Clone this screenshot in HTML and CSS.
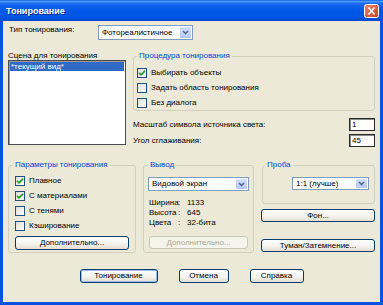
FILE: index.html
```html
<!DOCTYPE html>
<html lang="ru">
<head>
    <meta charset="UTF-8">
    <title>Тонирование</title>
    <link rel="stylesheet" href="styles.css">
</head>
<body>
    <div class="window">
        <div class="titlebar">
            <span class="title">Тонирование</span>
            <span class="close">
                <svg width="15" height="14" viewBox="0 0 15 14">
                    <defs>
                        <linearGradient id="cg" x1="0" y1="0" x2="1" y2="1">
                            <stop offset="0" stop-color="#f0876a"/>
                            <stop offset="1" stop-color="#c8401f"/>
                        </linearGradient>
                    </defs>
                    <rect x="0.5" y="0.5" width="14" height="13" rx="2" fill="url(#cg)" stroke="#fff"/>
                    <path d="M4.5 3.5 L10.5 10.5 M10.5 3.5 L4.5 10.5" stroke="#fff" stroke-width="1.6"/>
                </svg>
            </span>
        </div>
        <div class="frame">
            <div class="type-row">
                <span class="type-label">Тип тонирования:</span>
                <div class="combo type-combo">
                    <span>Фотореалистичное</span>
                    <span class="drop"><svg width="7" height="5" viewBox="0 0 7 5"><path d="M1 1 L3.5 3.5 L6 1" fill="none" stroke="#4d6185" stroke-width="1.5"/></svg></span>
                </div>
            </div>

            <div class="mid">
                <div class="scene">
                    <div class="caption">Сцена для тонирования</div>
                    <div class="listbox">
                        <div class="item sel">*текущий вид*</div>
                    </div>
                </div>
                <div class="side">
                    <fieldset class="group proc">
                        <legend>Процедура тонирования</legend>
                        <div class="check"><span class="box"><svg width="8" height="8" viewBox="0 0 8 8"><path d="M1 3.8 L3 5.8 L7 1.8" fill="none" stroke="#21a121" stroke-width="1.7"/></svg></span>Выбирать объекты</div>
                        <div class="check"><span class="box"></span>Задать область тонирования</div>
                        <div class="check"><span class="box"></span>Без диалога</div>
                    </fieldset>
                    <div class="field first">
                        <span>Масштаб символа источника света:</span>
                        <span class="edit">1</span>
                    </div>
                    <div class="field">
                        <span>Угол сглаживания:</span>
                        <span class="edit">45</span>
                    </div>
                </div>
            </div>

            <div class="groups">
                <fieldset class="group params">
                    <legend>Параметры тонирования</legend>
                    <div class="check"><span class="box"><svg width="8" height="8" viewBox="0 0 8 8"><path d="M1 3.8 L3 5.8 L7 1.8" fill="none" stroke="#21a121" stroke-width="1.7"/></svg></span>Плавное</div>
                    <div class="check"><span class="box"><svg width="8" height="8" viewBox="0 0 8 8"><path d="M1 3.8 L3 5.8 L7 1.8" fill="none" stroke="#21a121" stroke-width="1.7"/></svg></span>С материалами</div>
                    <div class="check"><span class="box"></span>С тенями</div>
                    <div class="check"><span class="box"></span>Кэширование</div>
                    <button class="btn wide">Дополнительно...</button>
                </fieldset>

                <fieldset class="group output">
                    <legend>Вывод</legend>
                    <div class="combo">
                        <span>Видовой экран</span>
                        <span class="drop"><svg width="7" height="5" viewBox="0 0 7 5"><path d="M1 1 L3.5 3.5 L6 1" fill="none" stroke="#4d6185" stroke-width="1.5"/></svg></span>
                    </div>
                    <div class="info">
                        <span>Ширина</span><span>:</span><span>1133</span>
                        <span>Высота</span><span>:</span><span>645</span>
                        <span>Цвета</span><span>:</span><span>32-бита</span>
                    </div>
                    <button class="btn disabled" disabled>Дополнительно...</button>
                </fieldset>

                <div class="probe-col">
                    <fieldset class="group probe">
                        <legend>Проба</legend>
                        <div class="combo probe-combo">
                            <span>1:1 (лучше)</span>
                            <span class="drop"><svg width="7" height="5" viewBox="0 0 7 5"><path d="M1 1 L3.5 3.5 L6 1" fill="none" stroke="#4d6185" stroke-width="1.5"/></svg></span>
                        </div>
                    </fieldset>
                    <button class="btn bg-btn">Фон...</button>
                    <button class="btn fog-btn">Туман/Затемнение...</button>
                </div>
            </div>

            <div class="actions">
                <button class="btn default render">Тонирование</button>
                <button class="btn cancel">Отмена</button>
                <button class="btn help">Справка</button>
            </div>
        </div>
    </div>
</body>
</html>
```

FILE: styles.css
```css
*{
    margin: 0;
    padding: 0;
    box-sizing: border-box;
}
body{
    font-family: "Liberation Sans", Arial, sans-serif;
    font-size: 8px;
    line-height: 10px;
    color: #000;
    background: #fff;
}
.window{
    width: 383px;
    height: 305px;
    display: flex;
    flex-direction: column;
}
.titlebar{
    height: 21px;
    background: linear-gradient(to bottom, #0a5fe6 0%, #4c98fd 7%, #1e70f4 15%, #0a5ee9 32%, #0057e5 60%, #0055e1 85%, #0046c9 100%);
    display: flex;
    align-items: center;
    justify-content: space-between;
    padding: 1px 4px 0 6px;
}
.title{
    color: #fff;
    font-weight: bold;
    font-size: 9px;
    text-shadow: 1px 1px #0a2a9c;
}
.close{
    display: flex;
}
.frame{
    flex: 1;
    background: #ece9d8;
    border: 3px solid #0752e0;
    border-top: 0;
    padding: 4px 5px 0 5px;
    display: flex;
    flex-direction: column;
}

/* top row */
.type-row{
    display: flex;
    align-items: flex-start;
}
.type-label{
    width: 90px;
    padding-left: 1px;
}
.combo{
    height: 14px;
    border: 1px solid #7f9db9;
    background: #fff;
    display: flex;
    align-items: center;
    justify-content: space-between;
    padding: 1px;
}
.combo span:first-child{
    padding-left: 2px;
}
.combo .drop{
    width: 11px;
    height: 100%;
    background: linear-gradient(to bottom, #d2defc, #b4c8f6);
    border-radius: 1px;
    display: flex;
    align-items: center;
    justify-content: center;
}
.type-combo{
    width: 95px;
    height: 15px;
}

/* scene + procedure */
.mid{
    display: flex;
    gap: 7px;
    margin-top: 11px;
}
.scene{
    width: 118px;
}
.caption{
    line-height: 9px;
}
.listbox{
    height: 85px;
    border: 1px solid #4a4a4a;
    box-shadow: inset 1px 1px #9a9a9a;
    background: #fff;
    padding: 1px;
}
.item{
    height: 9px;
    line-height: 9px;
    padding-left: 1px;
}
.item.sel{
    background: #316ac5;
    color: #fff;
}
.side{
    flex: 1;
    display: flex;
    flex-direction: column;
}
.group{
    border: 1px solid #d0d0bf;
    border-radius: 3px;
    min-width: 0;
}
.group legend{
    color: #0046d5;
    padding: 0 2px;
    line-height: 10px;
}
.proc{
    padding: 4px 3px 0;
}
.check{
    display: flex;
    align-items: center;
    height: 15px;
}
.box{
    width: 10px;
    height: 10px;
    border: 1px solid #1c5180;
    background: linear-gradient(135deg, #dcdcd7, #fff);
    margin-right: 4px;
    display: flex;
    align-items: center;
    justify-content: center;
}
.field{
    display: flex;
    justify-content: space-between;
    align-items: center;
    height: 13px;
    margin-top: 3px;
}
.field.first{
    margin-top: 7px;
}
.edit{
    width: 26px;
    height: 13px;
    border: 1px solid #2a2a2a;
    box-shadow: inset 1px 1px #8a8a8a;
    background: #fff;
    padding-left: 2px;
    line-height: 11px;
}

/* lower groups */
.groups{
    display: flex;
    gap: 7px;
    margin-top: 13px;
    height: 93px;
}
.params{
    width: 128px;
    padding: 3px 6px 2px;
}
.params legend{
    margin-left: -2px;
}
.output{
    width: 111px;
    padding: 7px 4px 0;
}
.info{
    display: grid;
    grid-template-columns: 29px 9px 1fr;
    margin: 7px 0 0 1px;
}
.probe-col{
    width: 114px;
    display: flex;
    flex-direction: column;
    align-self: flex-start;
}
.probe{
    margin-left: 1px;
    padding: 7px 5px 13px 2px;
}
.probe-combo{
    width: 77px;
    height: 13px;
    margin-left: auto;
}

/* buttons */
.btn{
    font: inherit;
    color: #000;
    height: 13px;
    border: 1px solid #003c74;
    border-radius: 3px;
    background: linear-gradient(to bottom, #fff 0%, #f4f3ee 55%, #e2ded2 100%);
    display: flex;
    align-items: center;
    justify-content: center;
}
.btn.wide{
    width: 100%;
    height: 14px;
    margin-top: 3px;
}
.btn.disabled{
    width: 99px;
    margin: 8px 0 0 1px;
    color: #aca899;
    border-color: #c9c7ba;
    background: #f5f4ea;
}
.bg-btn{
    margin-top: 5px;
}
.fog-btn{
    margin-top: 17px;
}
.actions{
    display: flex;
    justify-content: center;
    gap: 21px;
    margin-top: 16px;
}
.actions .btn{
    height: 14px;
}
.btn.default{
    box-shadow: inset 0 0 0 1px #9fbcea;
}
.render{
    width: 78px;
}
.cancel{
    width: 50px;
}
.help{
    width: 54px;
}
```
